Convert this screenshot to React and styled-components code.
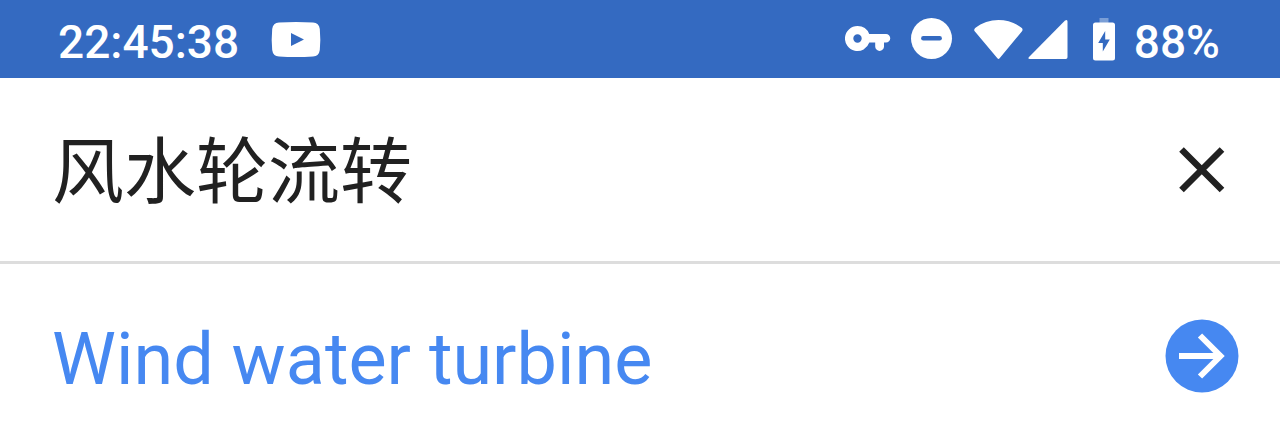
import React, { useState } from "react";
import styled, { createGlobalStyle } from "styled-components";

const GlobalStyle = createGlobalStyle`
  * { box-sizing: border-box; }
  body {
    margin: 0;
    background: #fff;
    font-family: Roboto, "Noto Sans CJK SC", sans-serif;
  }
`;

const StatusBar = styled.header`
  display: flex;
  align-items: center;
  justify-content: space-between;
  height: 78px;
  padding: 0 60px 0 58px;
  background: #346ac1;
  color: #fff;
`;

const StatusGroup = styled.div`
  display: flex;
  align-items: center;
  gap: ${({ $gap }) => $gap}px;
`;

const StatusText = styled.span`
  padding-top: 6px;
  font-size: 46px;
  line-height: 52px;
  font-weight: 500;
`;

const Icon = styled.svg`
  display: block;
  flex: none;
`;

const Row = styled.div`
  display: flex;
  align-items: center;
  gap: 24px;
  padding: 0 40px 0 52px;
`;

const SourceRow = styled(Row)`
  height: 186px;
  border-bottom: 3px solid #dddddd;
`;

const ResultRow = styled(Row)`
  height: 184px;
`;

const SourceInput = styled.input`
  flex: 1;
  min-width: 0;
  height: 116px;
  padding: 0 0 8px;
  border: 0;
  outline: 0;
  background: transparent;
  color: #212121;
  font-family: "Noto Sans CJK SC", sans-serif;
  font-size: 72px;
`;

const ResultText = styled.span`
  flex: 1;
  padding-top: 8px;
  color: #4688f1;
  font-size: 72px;
  line-height: 84px;
`;

const IconButton = styled.button`
  display: flex;
  flex: none;
  align-items: center;
  justify-content: center;
  width: 76px;
  height: 76px;
  padding: 0;
  border: 0;
  border-radius: 50%;
  background: transparent;
  color: #212121;
  cursor: pointer;
`;

function VideoIcon() {
  return (
    <Icon width="50" height="38" viewBox="272 20 50 38" aria-hidden="true">
      <path
        fill="#fff"
        fillRule="evenodd"
        d="M280 22.6Q297 21.4 314 22.6Q320 23 320.8 29Q321.8 39.5 320.8 50Q320 56.2 314 56.6Q297 57.6 280 56.6Q274 56.2 273.2 50Q272.2 39.5 273.2 29Q274 23 280 22.6ZM292 33V46L305 39.5Z"
      />
    </Icon>
  );
}

function KeyIcon() {
  return (
    <Icon width="46" height="42" viewBox="845 18 46 42" aria-hidden="true">
      <path
        fill="#fff"
        fillRule="evenodd"
        d="M857.5 26A12.5 12.5 0 0 1 869.2 34H886A4.2 4.2 0 0 1 886 42.5H884V46.5A4.4 4.4 0 0 1 875.2 46.5V42.5H869.3A12.5 12.5 0 1 1 857.5 26ZM857.5 34.3A4.2 4.2 0 1 0 857.5 42.7A4.2 4.2 0 1 0 857.5 34.3Z"
      />
    </Icon>
  );
}

function DoNotDisturbIcon() {
  return (
    <Icon width="42" height="42" viewBox="910 18 42 42" aria-hidden="true">
      <circle cx="930.5" cy="38.5" r="20.5" fill="#fff" />
      <path d="M922.3 38.3H938.7" stroke="#346ac1" strokeWidth="4.4" strokeLinecap="round" />
    </Icon>
  );
}

function WifiIcon() {
  return (
    <Icon width="50" height="42" viewBox="973 18 50 42" aria-hidden="true">
      <path
        fill="#fff"
        d="M975.2 28C988.5 17.3 1008.5 17.3 1021.8 28Q1023.2 29.6 1022 31.2L999.6 58.2Q998.5 59.6 997.4 58.2L974.7 31.2Q973.5 29.6 975.2 28Z"
      />
    </Icon>
  );
}

function SignalIcon() {
  return (
    <Icon width="40" height="42" viewBox="1028 18 40 42" aria-hidden="true">
      <path
        fill="#fff"
        d="M1064.8 20.7Q1067.5 18.7 1067.5 21.8V57.3Q1067.5 59 1065.8 59H1029.8Q1027.4 58.8 1029 56.9Z"
      />
    </Icon>
  );
}

function BatteryIcon() {
  return (
    <Icon width="24" height="44" viewBox="1092 17 24 44" aria-hidden="true">
      <path fill="#fff" fillOpacity="0.35" d="M1099.5 18H1108.5V23H1099.5Z" />
      <path
        fill="#fff"
        fillRule="evenodd"
        d="M1095.5 22.5H1112.5Q1115 22.5 1115 25V58Q1115 60.5 1112.5 60.5H1095.5Q1093 60.5 1093 58V25Q1093 22.5 1095.5 22.5ZM1105.2 31L1098.2 43H1102.8V51.5L1109.8 39.5H1105.2Z"
      />
    </Icon>
  );
}

function CloseIcon() {
  return (
    <Icon width="48" height="48" viewBox="0 0 48 48" aria-hidden="true">
      <path d="M3.5 3.5L44 44M44 3.5L3.5 44" stroke="currentColor" strokeWidth="6.5" />
    </Icon>
  );
}

function ArrowIcon() {
  return (
    <Icon width="76" height="76" viewBox="0 0 76 76" aria-hidden="true">
      <circle cx="38" cy="38" r="36.5" fill="#4688f1" />
      <path d="M15 38H58M36 17.5L56.5 38L36 58.5" fill="none" stroke="#fff" strokeWidth="6" />
    </Icon>
  );
}

export default function App() {
  const [text, setText] = useState("风水轮流转");

  return (
    <>
      <GlobalStyle />
      <StatusBar>
        <StatusGroup $gap={32}>
          <StatusText>22:45:38</StatusText>
          <VideoIcon />
        </StatusGroup>
        <StatusGroup $gap={18}>
          <StatusGroup $gap={24}>
            <StatusGroup $gap={20}>
              <KeyIcon />
              <DoNotDisturbIcon />
              <StatusGroup $gap={5}>
                <WifiIcon />
                <SignalIcon />
              </StatusGroup>
            </StatusGroup>
            <BatteryIcon />
          </StatusGroup>
          <StatusText>88%</StatusText>
        </StatusGroup>
      </StatusBar>
      <main>
        <SourceRow>
          <SourceInput
            aria-label="Source text"
            lang="zh-CN"
            value={text}
            onChange={(event) => setText(event.target.value)}
          />
          <IconButton type="button" aria-label="Clear text" onClick={() => setText("")}>
            <CloseIcon />
          </IconButton>
        </SourceRow>
        <ResultRow>
          <ResultText>Wind water turbine</ResultText>
          <IconButton type="button" aria-label="Open translation">
            <ArrowIcon />
          </IconButton>
        </ResultRow>
      </main>
    </>
  );
}
